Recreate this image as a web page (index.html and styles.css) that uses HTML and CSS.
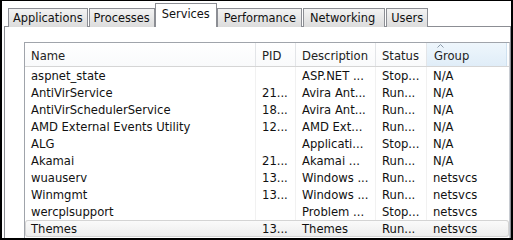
FILE: index.html
```html
<!DOCTYPE html>
<html>
<head>
  <title>Task Manager - Services</title>
  <link rel="stylesheet" href="styles.css">
</head>
<body>
  <div class="window">
    <div class="tabs">
      <div class="tab">Applications</div>
      <div class="tab">Processes</div>
      <div class="tab active">Services</div>
      <div class="tab wide">Performance</div>
      <div class="tab wide">Networking</div>
      <div class="tab">Users</div>
    </div>
    <div class="panel">
      <div class="list">
        <div class="row head">
          <div class="cell">Name</div>
          <div class="cell">PID</div>
          <div class="cell">Description</div>
          <div class="cell">Status</div>
          <div class="cell sorted">
            <svg class="arrow" width="7" height="4" viewBox="0 0 7 4"><path d="M0.5 3.5 L3.5 0.5 L6.5 3.5" fill="none" stroke="#8a99a8" stroke-width="1"/></svg>
            Group
          </div>
        </div>
        <div class="row">
          <div class="cell">aspnet_state</div>
          <div class="cell"></div>
          <div class="cell">ASP.NET ...</div>
          <div class="cell">Stop...</div>
          <div class="cell">N/A</div>
        </div>
        <div class="row">
          <div class="cell">AntiVirService</div>
          <div class="cell">21...</div>
          <div class="cell">Avira Ant...</div>
          <div class="cell">Run...</div>
          <div class="cell">N/A</div>
        </div>
        <div class="row">
          <div class="cell">AntiVirSchedulerService</div>
          <div class="cell">18...</div>
          <div class="cell">Avira Ant...</div>
          <div class="cell">Run...</div>
          <div class="cell">N/A</div>
        </div>
        <div class="row">
          <div class="cell">AMD External Events Utility</div>
          <div class="cell">12...</div>
          <div class="cell">AMD Ext...</div>
          <div class="cell">Run...</div>
          <div class="cell">N/A</div>
        </div>
        <div class="row">
          <div class="cell">ALG</div>
          <div class="cell"></div>
          <div class="cell">Applicati...</div>
          <div class="cell">Stop...</div>
          <div class="cell">N/A</div>
        </div>
        <div class="row">
          <div class="cell">Akamai</div>
          <div class="cell">21...</div>
          <div class="cell">Akamai ...</div>
          <div class="cell">Run...</div>
          <div class="cell">N/A</div>
        </div>
        <div class="row">
          <div class="cell">wuauserv</div>
          <div class="cell">13...</div>
          <div class="cell">Windows ...</div>
          <div class="cell">Run...</div>
          <div class="cell">netsvcs</div>
        </div>
        <div class="row">
          <div class="cell">Winmgmt</div>
          <div class="cell">13...</div>
          <div class="cell">Windows ...</div>
          <div class="cell">Run...</div>
          <div class="cell">netsvcs</div>
        </div>
        <div class="row">
          <div class="cell">wercplsupport</div>
          <div class="cell"></div>
          <div class="cell">Problem ...</div>
          <div class="cell">Stop...</div>
          <div class="cell">netsvcs</div>
        </div>
        <div class="row selected">
          <div class="cell">Themes</div>
          <div class="cell">13...</div>
          <div class="cell">Themes</div>
          <div class="cell">Run...</div>
          <div class="cell">netsvcs</div>
        </div>
      </div>
    </div>
  </div>
</body>
</html>
```

FILE: styles.css
```css
body {
  margin: 0;
  background-color: #fff;
  font-family: "DejaVu Sans", Verdana, sans-serif;
  font-size: 11.4px;
  color: #111;
}

.window {
  width: 513px;
  height: 240px;
  box-sizing: border-box;
  border: 2px solid #000;
  border-top-width: 1px;
  overflow: hidden;
  background-color: #fff;
}

/* tab strip */
.tabs {
  display: flex;
  align-items: flex-end;
  gap: 1px;
  height: 26px;
  padding-left: 6px;
  margin-bottom: -1px;
  position: relative;
  z-index: 1;
}

.tab {
  height: 18px;
  line-height: 18px;
  padding: 0 4px;
  border: 1px solid #8c8e94;
  border-bottom: none;
  background: linear-gradient(#f3f3f3, #dcdcdc);
  color: #111;
}

.tab.wide {
  padding: 0 5px 0 6px;
}

.tab.wide + .tab.wide {
  padding: 0 9px 0 6px;
}

.tab.active {
  height: 23px;
  line-height: 21px;
  padding: 0 6px;
  margin: 0 -1px;
  background: #fff;
}

/* tab page */
.panel {
  margin-left: 2px;
  height: 220px;
  border: 1px solid #8c8e94;
  background-color: #fff;
  padding: 15px 0 0 19px;
}

.list {
  border-top: 1px solid #a0a4ab;
  border-left: 1px solid #a0a4ab;
  border-right: 1px solid #c8ccd2;
  height: 100%;
  font-size: 11.6px;
}

.row {
  display: grid;
  grid-template-columns: 231px 40px 80px 51px 80px;
  height: 17px;
}

.cell {
  padding: 1px 0 0 6px;
  line-height: 16px;
  white-space: nowrap;
  overflow: hidden;
  border-right: 1px solid #f1f1f1;
}

.cell:last-child {
  border-right: none;
}

.row.head {
  height: 23px;
  border-bottom: 1px solid #d5d5d5;
  background: linear-gradient(#fff, #f9fafb);
  color: #222;
}

.row.head .cell {
  padding-top: 5px;
  border-right: 1px solid #e3e5e8;
}

.row.head .cell.sorted {
  position: relative;
  background: linear-gradient(#eef6fc, #e0edf8);
  border-right: 1px solid #cfe1f0;
  padding-left: 7px;
}

.arrow {
  position: absolute;
  left: 10px;
  top: 1px;
}

.row.selected {
  border-radius: 3px;
  box-shadow: inset 0 0 0 1px #d4d4d4;
  background: linear-gradient(#fbfbfb, #ececec);
}

.row.selected .cell {
  border-right-color: transparent;
}
```
